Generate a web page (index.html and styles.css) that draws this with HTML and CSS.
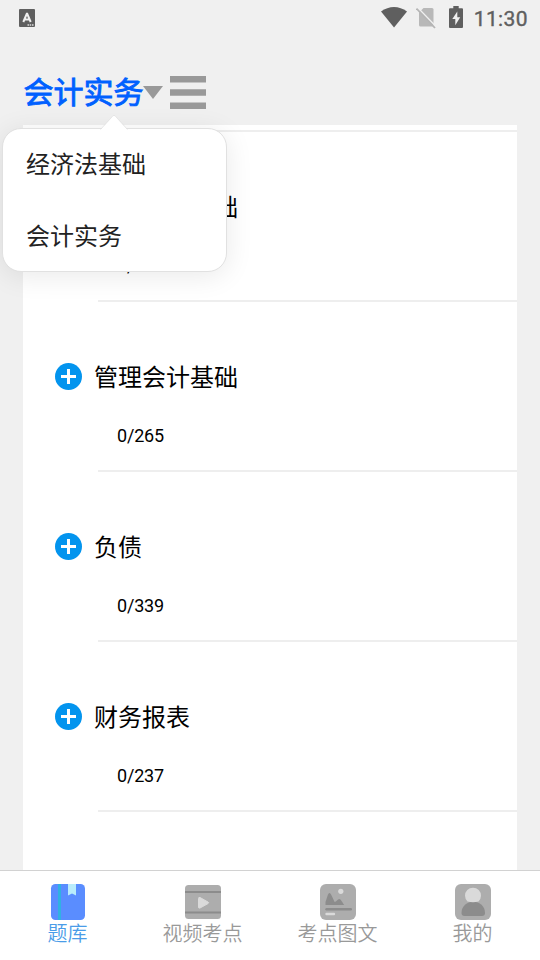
FILE: index.html
```html
<!DOCTYPE html>
<html lang="zh-CN">
<head>
<meta charset="utf-8">
<title>题库</title>
<link rel="stylesheet" href="styles.css">
</head>
<body>
<div class="app">
  <div class="status">
    <svg class="status-app" width="16" height="18" viewBox="0 0 16 18"><rect width="16" height="18" rx="1" fill="#5f5f5f"/><path d="M4.3 13 7.8 4.8h.4L11.7 13M5.6 10.4h4.8" fill="none" stroke="#f0f0f0" stroke-width="2"/><path d="M8.5 16h1.5m.7 0h1.5m.8 0h1.5" stroke="#ddd" stroke-width="1.4"/></svg>
    <div class="status-right">
      <svg width="26" height="21" viewBox="0 0 26 21"><path d="M0 4.5C8-1.5 18-1.5 26 4.5L13 20.5Z" fill="#5f5f5f"/></svg>
      <svg class="sim" width="20" height="22" viewBox="0 0 20 22"><path d="M7.500 1H16q1.500 0 1.500 1.500V18q0 1.500-1.500 1.500H4.500Q3 19.500 3 18V5.500Z" fill="#b8b8b8"/><path d="M1.500 .5 20.500 20" stroke="#f0f0f0" stroke-width="1.500"/><path d="M.5 1.500 19 21" stroke="#b5b5b5" stroke-width="1.800"/></svg>
      <svg class="battery" width="14" height="22" viewBox="0 0 14 22"><path d="M4.300 0h5.400v2.300H13q1 0 1 1V21q0 1-1 1H1q-1 0-1-1V3.300q0-1 1-1h3.300Z" fill="#5f5f5f"/><path d="M8.300 5.500 3.300 13h3v6.300l4.900-8H8.300Z" fill="#f0f0f0"/></svg>
      <span class="clock">11:30</span>
    </div>
  </div>
  <header class="header">
    <h1>会计实务</h1>
    <svg class="caret" width="20" height="13" viewBox="0 0 20 13"><path d="M0 0h20L10 13Z" fill="#999"/></svg>
    <svg class="menu" width="36" height="33" viewBox="0 0 36 33"><path d="M0 3.300h36M0 16.500h36M0 29.700h36" stroke="#999" stroke-width="6.600"/></svg>
    <div class="popover">
      <svg class="arrow" width="28" height="16" viewBox="0 0 28 16"><path d="M0 15.500 13 .8q1-1 2 0L28 15.500Z" fill="#fff"/><path d="M.5 14.500 13 .8q1-1 2 0L27.500 14.500" fill="none" stroke="#e0e0e0" stroke-width=".7"/></svg>
      <div class="option">经济法基础</div>
      <div class="option">会计实务</div>
    </div>
  </header>
  <main class="list">
    <section class="row"><div class="row-title"><i class="plus"></i><span>政府会计基础</span></div><div class="count">0/161</div></section>
    <section class="row"><div class="row-title"><i class="plus"></i><span>管理会计基础</span></div><div class="count">0/265</div></section>
    <section class="row"><div class="row-title"><i class="plus"></i><span>负债</span></div><div class="count">0/339</div></section>
    <section class="row"><div class="row-title"><i class="plus"></i><span>财务报表</span></div><div class="count">0/237</div></section>
  </main>
  <nav class="tabs">
    <div class="tab active">
      <svg width="36" height="36" viewBox="0 0 36 36"><rect x="1" width="34" height="36" rx="4.500" fill="#5a8dff"/><path d="M8 0h3v36H8Z" fill="#30b1e3"/><path d="M18 0h8v11.500l-4-2-4 2Z" fill="#b9ecfb"/></svg>
      <span>题库</span>
    </div>
    <div class="tab">
      <svg width="36" height="36" viewBox="0 0 36 36"><rect y="1" width="36" height="34" rx="3.500" fill="#adadad"/><path d="M0 8h36M0 28.500h36" stroke="#8c8c8c" stroke-width="2"/><path d="M15 13.500 23 18q1.500.8 0 1.600L15 24q-1.500.5-1.500-1V14.500q0-1.500 1.500-1Z" fill="#dadada" stroke="#dadada"/></svg>
      <span>视频考点</span>
    </div>
    <div class="tab">
      <svg width="36" height="36" viewBox="0 0 36 36"><rect width="36" height="36" rx="6" fill="#adadad"/><circle cx="20.800" cy="7.300" r="2.600" fill="#dadada"/><path d="M5.500 21V18C7 14 8 9 9.500 9S13 15 14.700 18c1.500 0 3-3 4.500-3s3 3 5 6Z" fill="#8c8c8c"/><path d="M6.500 25.300h24.300" stroke="#8c8c8c" stroke-width="2.400" stroke-linecap="round"/><path d="M6.500 30h7.500" stroke="#dadada" stroke-width="2.400" stroke-linecap="round"/></svg>
      <span>考点图文</span>
    </div>
    <div class="tab">
      <svg width="36" height="36" viewBox="0 0 36 36"><rect width="36" height="36" rx="6" fill="#adadad"/><path d="M6.500 29C6.500 22 12 17.700 18.300 17.700S30 22 30 29c0 2-1 3-3 3H9.500c-2 0-3-1-3-3Z" fill="#8c8c8c"/><path d="M12.500 17.500A8 8 0 1 1 23.500 17.500Q18 18.800 12.500 17.500Z" fill="#dadada"/></svg>
      <span>我的</span>
    </div>
  </nav>
</div>
</body>
</html>
```
FILE: styles.css
```css
* { box-sizing: border-box; }
body { margin: 0; background: #f0f0f0; font-family: Roboto, "Noto Sans CJK SC", sans-serif; color: #000; }
.app { display: flex; flex-direction: column; width: 540px; height: 960px; overflow: hidden; }
svg { display: block; flex: none; }
.status { display: flex; justify-content: space-between; height: 36px; padding: 6px 12px 0 19px; }
.status-app { margin-top: 3px; }
.status-right { display: flex; align-items: flex-start; }
.status-right svg:first-child { margin-top: 1px; }
.sim { margin: 1px 0 0 9px; }
.battery { margin-left: 13px; }
.clock { margin-left: 11px; font-size: 21px; line-height: 26px; font-weight: 400; color: #5f5f5f; letter-spacing: .4px; -webkit-text-stroke: .4px #5f5f5f; }
.header { position: relative; display: flex; align-items: center; height: 89px; padding: 24px 0 0 23.5px; }
h1 { margin: 1px 0 0; font-size: 30px; line-height: 40px; font-weight: 400; color: #0060ff; -webkit-text-stroke: .9px #0060ff; }
.caret { margin: -1px 0 0 -.5px; }
.menu { margin: -1px 0 0 7px; }
.popover { position: absolute; z-index: 2; left: 2px; top: 92px; width: 225px; height: 144px; border: 1px solid #e1e1e1; border-radius: 19px; background: #fff; box-shadow: 0 4px 28px rgba(0,0,0,.09); }
.arrow { position: absolute; left: 97px; top: -14px; }
.option { height: 72px; padding-left: 23px; font-size: 24px; line-height: 72px; color: #222; }
.list { flex: 1; min-height: 0; overflow: hidden; margin: 0 23px; background: #fff; border-top: 5px solid #fff; }
.list::before { content: ""; display: block; height: 2px; background: #eee; }
.row { height: 170px; padding-top: 50px; }
.row::after { content: ""; display: block; height: 2px; margin: 22px 0 0 75px; background: #eee; }
.row-title { display: flex; align-items: center; height: 48px; padding-left: 32px; font-size: 24px; }
.row-title span { padding-bottom: 2px; }
.plus { width: 27px; height: 27px; margin-right: 12px; border-radius: 50%; background: linear-gradient(#fff,#fff) center / 15px 3px no-repeat, linear-gradient(#fff,#fff) center / 3px 15px no-repeat, #0394ee; }
.count { height: 24px; margin: 24px 0 0 94px; font-size: 18px; line-height: 24px; letter-spacing: -.2px; }
.tabs { display: flex; height: 90px; flex: none; border-top: 1px solid #d2d2d2; background: #fff; }
.tab { flex: 1; display: flex; flex-direction: column; align-items: center; padding-top: 13px; color: #999; font-size: 20px; line-height: 28px; font-weight: 350; }
.active { color: #4a9ce8; }
```
